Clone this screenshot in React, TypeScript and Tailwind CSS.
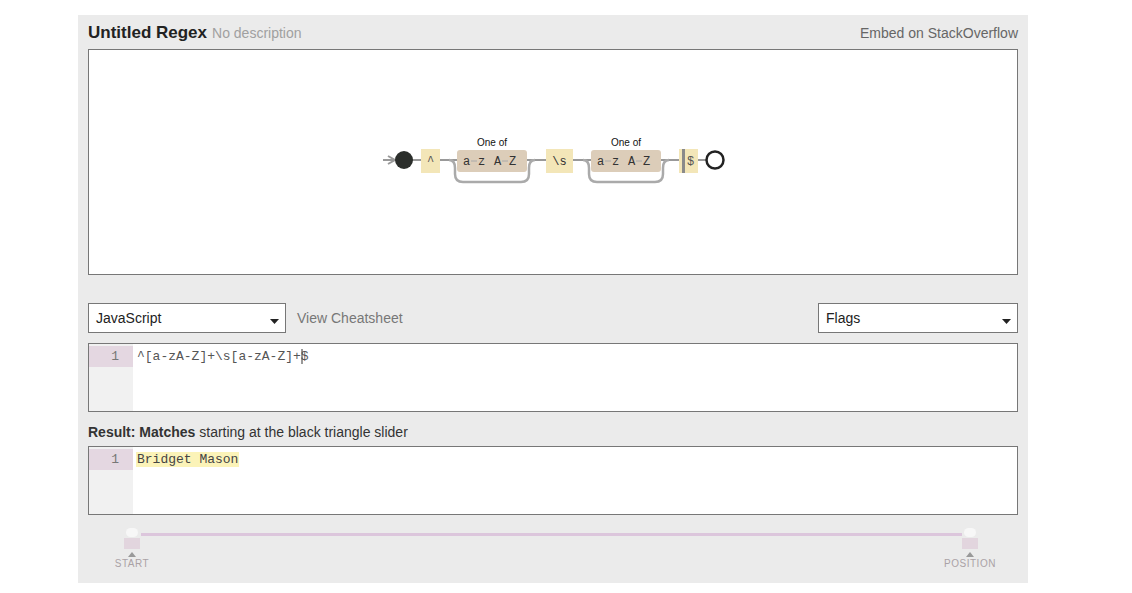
const sans = "font-['Liberation_Sans',Arial,sans-serif]";
const mono = "font-['Liberation_Mono','Courier_New',monospace]";

const Caret = () => (
  <svg width="9" height="5" viewBox="0 0 9 5" className="mt-[7px]">
    <path d="M0 0 L9 0 L4.5 5 Z" fill="#222" />
  </svg>
);

const Select = ({ label, width }: { label: string; width: string }) => (
  <div
    className={`${width} h-[30px] border border-[#777] bg-white flex items-center justify-between pl-[7px] pr-[6px] text-[14px] text-[#222]`}
  >
    <span>{label}</span>
    <Caret />
  </div>
);

const CharClass = ({ x }: { x: number }) => {
  const cx = x + 35;
  return (
    <g>
      <path
        d={`M${x - 8} 160 Q${x - 2} 160 ${x - 2} 168 L${x - 2} 174 Q${x - 2} 182 ${x + 6} 182 L${x + 64} 182 Q${x + 72} 182 ${x + 72} 174 L${x + 72} 168 Q${x + 72} 160 ${x + 78} 160`}
        fill="none"
        stroke="#aaa"
        strokeWidth="2.5"
      />
      <text x={cx} y="146" textAnchor="middle" fontSize="10" fontFamily="Liberation Sans, Arial, sans-serif" fill="#111">
        One of
      </text>
      <rect x={x} y="150" width="70" height="22" rx="3" fill="#dccdb9" />
      <text x={x + 6} y="165" fontSize="12" fontFamily="Liberation Mono, monospace" fill="#333">a</text>
      <line x1={x + 14} y1="161" x2={x + 20} y2="161" stroke="#aaa" strokeWidth="1" />
      <text x={x + 21} y="165" fontSize="12" fontFamily="Liberation Mono, monospace" fill="#333">z</text>
      <text x={x + 37} y="165" fontSize="12" fontFamily="Liberation Mono, monospace" fill="#333">A</text>
      <line x1={x + 45} y1="161" x2={x + 51} y2="161" stroke="#aaa" strokeWidth="1" />
      <text x={x + 52} y="165" fontSize="12" fontFamily="Liberation Mono, monospace" fill="#333">Z</text>
    </g>
  );
};

const Diagram = () => (
  <svg width="928" height="224" viewBox="89 50 928 224">
    <line x1="383" y1="160" x2="706" y2="160" stroke="#999" strokeWidth="2" />
    <path d="M388 156 L395 160 L388 164" fill="none" stroke="#999" strokeWidth="2" />
    <circle cx="404" cy="160" r="9" fill="#2b2e2b" />
    <rect x="421" y="149" width="19" height="24" fill="#f3e6b8" />
    <text x="430.5" y="165" textAnchor="middle" fontSize="12" fontFamily="Liberation Mono, monospace" fill="#555">^</text>
    <CharClass x={457} />
    <rect x="546" y="149" width="27" height="24" fill="#f3e6b8" />
    <text x="559.5" y="165" textAnchor="middle" fontSize="12" fontFamily="Liberation Mono, monospace" fill="#333">\s</text>
    <CharClass x={591} />
    <rect x="679" y="149" width="19" height="24" fill="#f3e6b8" />
    <rect x="682" y="149" width="3" height="24" fill="#8a8a8a" />
    <text x="690.5" y="165" textAnchor="middle" fontSize="12" fontFamily="Liberation Mono, monospace" fill="#555">$</text>
    <circle cx="715" cy="160" r="8.5" fill="#fff" stroke="#222" strokeWidth="2.5" />
  </svg>
);

const Editor = ({ children }: { children: React.ReactNode }) => (
  <div className="h-[69px] border border-[#777] bg-white flex">
    <div className="w-[44px] bg-[#f1f1f1] pt-[2px]">
      <div className={`h-[21px] bg-[#e4d7e1] text-right pr-[14px] text-[13px] leading-[21px] text-[#777] ${mono}`}>1</div>
    </div>
    <div className={`pl-[4px] pt-[2px] text-[13px] leading-[21px] text-[#555] ${mono}`}>{children}</div>
  </div>
);

const Handle = ({ label, left }: { label: string; left: string }) => (
  <div className={`absolute top-[13px] ${left} w-[60px] -ml-[30px] flex flex-col items-center`}>
    <div className="w-[12px] h-[9px] rounded-full bg-[#f7f7f7]" />
    <div className="w-[16px] h-[11px] mt-[1px] bg-[#e2d5de]" />
    <div className="w-0 h-0 mt-[3px] border-l-[4px] border-r-[4px] border-b-[5px] border-l-transparent border-r-transparent border-b-[#999]" />
    <div className="mt-[1px] text-[10px] leading-[11px] tracking-[0.5px] text-[#aaa2a6]">{label}</div>
  </div>
);

export default function App() {
  return (
    <div className={`min-h-screen bg-white pt-[15px] ${sans}`}>
      <div className="ml-[78px] w-[950px] h-[568px] bg-[#ebebeb] px-[10px]">
        {/* header */}
        <div className="h-[34px] flex items-center justify-between">
          <div className="flex items-baseline gap-[5px] pt-[2px]">
            <span className="text-[17px] font-bold text-[#222]">Untitled Regex</span>
            <span className="text-[14px] text-[#a0a0a0]">No description</span>
          </div>
          <span className="text-[14px] text-[#666] pt-[2px]">Embed on StackOverflow</span>
        </div>

        {/* railroad diagram */}
        <div className="h-[226px] border border-[#777] bg-white">
          <Diagram />
        </div>

        {/* flavour + flags */}
        <div className="mt-[28px] h-[30px] flex items-center">
          <Select label="JavaScript" width="w-[198px]" />
          <span className="ml-[11px] text-[14px] text-[#777]">View Cheatsheet</span>
          <div className="ml-auto">
            <Select label="Flags" width="w-[200px]" />
          </div>
        </div>

        {/* regex */}
        <div className="mt-[10px]">
          <Editor>
            <span>^[a-zA-Z]+\s[a-zA-Z]+</span>
            <span className="inline-block w-[2px] h-[15px] bg-[#999] align-middle -mr-[2px]" />
            <span>$</span>
          </Editor>
        </div>

        {/* result */}
        <div className="h-[34px] pt-[12px] text-[14px] leading-[16px] text-[#333]">
          <span className="font-bold">Result: Matches</span> starting at the black triangle slider
        </div>
        <Editor>
          <span className="bg-[#fbf3b8] px-[1px] -ml-[1px] text-[#444]">Bridget Mason</span>
        </Editor>

        {/* slider */}
        <div className="relative h-[69px]">
          <div className="absolute top-[18px] left-[53px] w-[821px] h-[3px] bg-[#dcc6dc]" />
          <Handle label="START" left="left-[44px]" />
          <Handle label="POSITION" left="left-[882px]" />
        </div>
      </div>
    </div>
  );
}
